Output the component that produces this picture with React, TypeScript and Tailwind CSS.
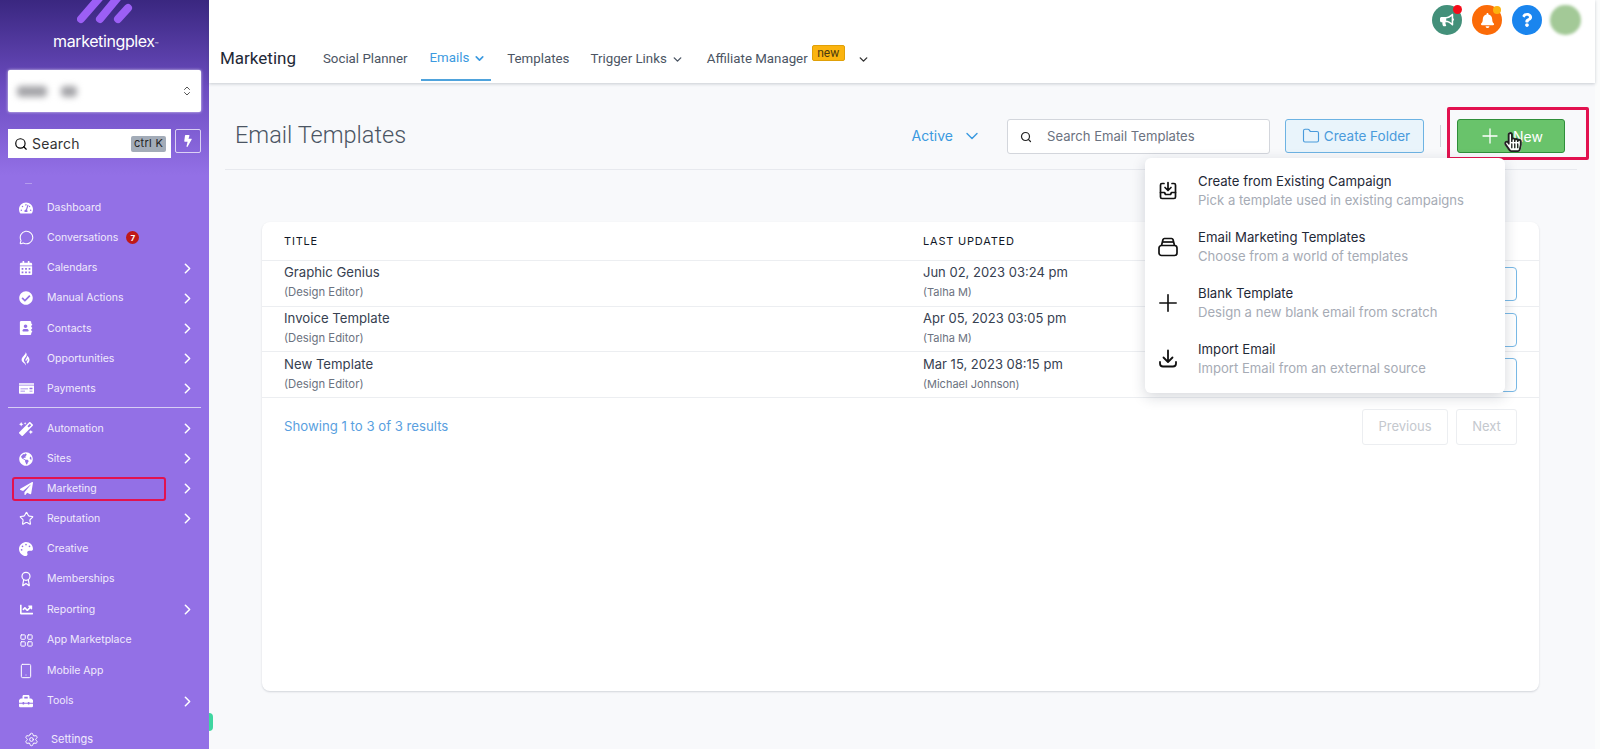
import React from "react";
import { ChevronRight, ChevronDown, ChevronsUpDown, MessageCircle, Star, Award, LayoutGrid, Smartphone, Settings, Search, Folder, Plus } from "lucide-react";
import { FaTachometerAlt, FaCalendarAlt, FaCheckCircle, FaAddressBook, FaGripfire, FaMoneyCheck, FaMagic, FaGlobeAmericas, FaPaperPlane, FaPalette, FaChartLine, FaToolbox, FaBullhorn, FaBell, FaQuestion, FaBolt, FaHandPointer, FaRegHandPointer } from "react-icons/fa";

const G1: [string, React.ReactNode, boolean, string?][] = [
  ["Dashboard", <FaTachometerAlt size={14} />, false],
  ["Conversations", <MessageCircle size={15} strokeWidth={1.7} />, false, "7"],
  ["Calendars", <FaCalendarAlt size={14} />, true],
  ["Manual Actions", <FaCheckCircle size={14} />, true],
  ["Contacts", <FaAddressBook size={14} />, true],
  ["Opportunities", <FaGripfire size={14} />, true],
  ["Payments", <FaMoneyCheck size={15} />, true],
];
const G2: [string, React.ReactNode, boolean][] = [
  ["Automation", <FaMagic size={14} />, true],
  ["Sites", <FaGlobeAmericas size={14} />, true],
  ["Marketing", <FaPaperPlane size={13} />, true],
  ["Reputation", <Star size={15} strokeWidth={1.8} />, true],
  ["Creative", <FaPalette size={14} />, false],
  ["Memberships", <Award size={16} strokeWidth={1.8} />, false],
  ["Reporting", <FaChartLine size={13} />, true],
  ["App Marketplace", <LayoutGrid size={15} strokeWidth={1.6} />, false],
  ["Mobile App", <Smartphone size={16} strokeWidth={1.5} />, false],
  ["Tools", <FaToolbox size={14} />, true],
];

function NavRow({ label, icon, arrow, badge, h }: { label: string; icon: React.ReactNode; arrow: boolean; badge?: string; h: string }) {
  return (
    <div className={`relative flex ${h} items-center pl-[18px] text-[10.5px] text-[#f0eafc]`}>
      <span className="flex w-[16px] justify-center text-white">{icon}</span>
      <span className="ml-[13px]">{label}</span>
      {badge && (
        <span className="ml-[8px] flex h-[13px] w-[13px] items-center justify-center rounded-full bg-[#c01818] text-[8px] font-bold text-white">{badge}</span>
      )}
      {arrow && <ChevronRight size={17} strokeWidth={2.2} className="absolute left-[179px] text-white" />}
      {label === "Marketing" && <span className="absolute left-[12px] top-[3px] h-[24px] w-[154px] rounded-[3px] border-2 border-[#e2124f]" />}
    </div>
  );
}

function Sidebar() {
  return (
    <aside className="relative flex h-full w-[209px] shrink-0 flex-col bg-[#9370e6] font-['Inter',sans-serif]">
      <div className="flex h-[175px] flex-col bg-gradient-to-b from-[#3a2780] via-[#6c4cc0] to-[#9370e6] px-[8px]">
        <div className="flex h-[25px] justify-center">
          <svg width="56" height="25" viewBox="0 0 56 25">
            <g stroke="#9c5ff5" strokeWidth="8" strokeLinecap="round">
              <path d="M4 19 L24 -4" />
              <path d="M23 19 L42 -4" />
              <path d="M41 19 L51 8" />
            </g>
          </svg>
        </div>
        <div className="mt-[5px] pl-[2px] text-center text-[16px] leading-[22px] tracking-[-0.4px] text-white">marketingplex<span className="text-[6px]">™</span></div>
        <div className="mt-[14px] flex h-[42px] items-center justify-between rounded-[2px] bg-white pl-[9px] pr-[8px] shadow-[0_0_3px_rgba(255,255,255,0.8)]">
          <div className="flex gap-[14px]">
            <div className="h-[11px] w-[30px] rounded bg-[#a4a4a8] blur-[3px]" />
            <div className="h-[11px] w-[16px] rounded bg-[#a4a4a8] blur-[3px]" />
          </div>
          <ChevronsUpDown size={12} className="text-[#555]" />
        </div>
        <div className="mt-[17px] flex gap-[4px]">
          <div className="flex h-[29px] w-[163px] items-center bg-white pl-[6px] pr-[5px] text-black">
            <Search size={14} strokeWidth={2} />
            <span className="ml-[4px] text-[14px] tracking-[0.2px] text-[#333]">Search</span>
            <span className="ml-auto flex h-[16px] w-[35px] items-center justify-center rounded-[2px] bg-[#a3acb8] text-[11px] tracking-[0.3px] text-[#222]">ctrl K</span>
          </div>
          <div className="flex h-[24px] w-[26px] items-center justify-center rounded-[2px] border border-white/70 text-white">
            <FaBolt size={12} />
          </div>
        </div>
      </div>
      <div className="ml-[25px] mt-[8px] h-px w-[7px] bg-white/30" />
      <div className="mt-[8.6px]">
        {G1.map(([l, i, a, b]) => <NavRow key={l} label={l} icon={i} arrow={a} badge={b} h="h-[30.2px]" />)}
      </div>
      <div className="mx-[8px] mt-[3px] h-[1px] bg-[#d8cef5]" />
      <div className="mt-[6px]">
        {G2.map(([l, i, a], n) => <NavRow key={l} label={l} icon={i} arrow={a} h={n > 4 ? "h-[30.5px]" : "h-[30px]"} />)}
      </div>
      <div className="mt-[15px] flex items-center pl-[24px] text-[11px] text-[#f0eafc]">
        <Settings size={15} strokeWidth={1.6} className="text-white" />
        <span className="ml-[12px]">Settings</span>
      </div>
      <span className="absolute left-[209px] top-[713px] z-10 h-[18px] w-[4px] rounded-r-full bg-[#3fd6a0]" />
    </aside>
  );
}

function Header() {
  const circle = "relative flex h-[30px] w-[30px] items-center justify-center rounded-full text-white";
  return (
    <header className="h-[83px] bg-white font-['Roboto',sans-serif] shadow-[0_1px_3px_rgba(60,70,90,0.25)]">
      <div className="flex justify-end gap-[10px] pr-[14px] pt-[5px]">
        <div className={`${circle} bg-[#43907a]`}><FaBullhorn size={14} /><span className="absolute right-[0px] top-[0px] h-[9px] w-[9px] rounded-full bg-[#f50d1a]" /></div>
        <div className={`${circle} bg-[#fb6b08]`}><FaBell size={15} /><span className="absolute right-[1px] top-[1px] h-[8px] w-[8px] rounded-full bg-[#fcb20f]" /></div>
        <div className={`${circle} bg-[#1a85ee]`}><FaQuestion size={14} /></div>
        <div className="-ml-[2px] h-[30px] w-[31px] rounded-full bg-[#a3c997] blur-[1.5px]" />
      </div>
      <nav className="flex h-[46px] items-center pl-[11px] pt-[2px] text-[13.3px] text-[#4b5563]">
        <span className="mr-[27px] text-[17px] text-[#1f2937]">Marketing</span>
        <span className="mr-[13px]">Social Planner</span>
        <span className="mr-[16px] flex h-full items-center border-b-2 border-[#4fa3dc] pl-[9px] pr-[5px] text-[#3b9ae0]">
          Emails<ChevronDown size={13} strokeWidth={3} className="ml-[4px]" />
        </span>
        <span className="mr-[21px]">Templates</span>
        <span className="mr-[23px] flex items-center">Trigger Links<ChevronDown size={13} strokeWidth={2.6} className="ml-[4px]" /></span>
        <span>Affiliate Manager</span>
        <span className="mb-[13px] ml-[4px] flex h-[16px] w-[33px] items-center justify-center rounded-[2px] border border-[#e0a008] bg-[#fbb40f] text-[12px] leading-none text-[#4a3a10]">new</span>
        <ChevronDown size={13} strokeWidth={2.6} className="ml-[12px] text-[#333]" />
      </nav>
    </header>
  );
}

function Toolbar() {
  return (
    <div className="ml-[16px] mr-[18px] mt-[36px] flex h-[51px] items-start border-b border-[#e7e9ee] pl-[10px] pr-[12px] font-['Inter',sans-serif]">
      <h1 className="font-['Roboto',sans-serif] text-[23.5px] font-light leading-[32px] text-[#4b5563]">Email Templates</h1>
      <div className="ml-auto flex h-[34px] items-center text-[14px] text-[#3b9ae0]">
        <span className="mb-[2px]">Active</span>
        <ChevronDown size={20} strokeWidth={1.7} className="ml-[9px] mr-[25px]" />
        <div className="mr-[15px] mt-[1px] flex h-[35px] w-[263px] items-center rounded-[3px] border border-[#d3d6dc] bg-white pl-[12px] text-[#6b7280]">
          <Search size={12} strokeWidth={2.4} className="text-[#222]" />
          <span className="ml-[15px] text-[13.1px]">Search Email Templates</span>
        </div>
        <div className="mr-[16px] flex h-[34px] w-[139px] items-center justify-center rounded-[3px] border border-[#6db3e3] bg-[#e9f4fb] pl-[3px] text-[13.5px] text-[#4a9bdc]">
          <Folder size={18} strokeWidth={1.5} className="mr-[4px]" />Create Folder
        </div>
        <div className="mr-[16px] h-[22px] w-px bg-[#d1d5db]" />
        <div className="relative flex h-[34px] w-[108px] items-center rounded-[3px] border border-[#2f8f3a] bg-[#69c36b] pl-[20px] text-[14px] text-white">
          <Plus size={24} strokeWidth={1.3} />
          <span className="ml-[11px]">New</span>
          <span className="absolute left-[-11px] top-[-13px] h-[53px] w-[142px] rounded-[2px] border-[3px] border-[#e2124f]" />
          <span className="absolute left-[45px] top-[12px]">
            <FaHandPointer size={20} className="absolute text-white" />
            <FaRegHandPointer size={20} className="absolute text-[#222]" />
          </span>
        </div>
      </div>
    </div>
  );
}

const ROWS = [
  ["Graphic Genius", "Jun 02, 2023 03:24 pm", "(Talha M)"],
  ["Invoice Template", "Apr 05, 2023 03:05 pm", "(Talha M)"],
  ["New Template", "Mar 15, 2023 08:15 pm", "(Michael Johnson)"],
];

function Table() {
  return (
    <section className="ml-[53px] mt-[52px] h-[469px] w-[1277px] rounded-[8px] bg-white font-['Inter',sans-serif] shadow-[0_1px_2px_rgba(60,70,90,0.2)]">
      <div className="flex h-[39px] items-center border-b border-[#eceef1] pl-[22px] text-[11px] tracking-[0.8px] text-[#111827]">
        <span className="w-[639px]">TITLE</span>
        <span>LAST UPDATED</span>
      </div>
      {ROWS.map(([t, d, u]) => (
        <div key={t} className="flex h-[45.7px] border-b border-[#eceef1] pl-[22px]">
          <div className="w-[639px] pt-[1.4px]">
            <div className="text-[13.2px] leading-[20px] text-[#374151]">{t}</div>
            <div className="mt-[1px] text-[11.3px] leading-[18px] text-[#6b7280]">(Design Editor)</div>
          </div>
          <div className="w-[540px] pt-[1.4px]">
            <div className="text-[13px] leading-[20px] text-[#374151]">{d}</div>
            <div className="mt-[1px] text-[11px] leading-[18px] text-[#6b7280]">{u}</div>
          </div>
          <div className="mt-[6px] flex h-[34px] w-[54px] items-center justify-end rounded-[4px] border border-[#79b9e6] pr-[9px] text-[#3b9ae0]">
            <ChevronDown size={11} strokeWidth={3} />
          </div>
        </div>
      ))}
      <div className="flex items-start pl-[22px] pr-[22px] pt-[11px]">
        <span className="mt-[7px] text-[13.2px] leading-[20px] text-[#5a9fe0]">Showing 1 to 3 of 3 results</span>
        <div className="ml-auto flex gap-[8px] text-[13px] text-[#c4c8ce]">
          <span className="flex h-[36px] w-[86px] items-center justify-center rounded-[3px] border border-[#eceef1]">Previous</span>
          <span className="flex h-[36px] w-[61px] items-center justify-center rounded-[3px] border border-[#eceef1]">Next</span>
        </div>
      </div>
    </section>
  );
}

const MENU: [React.ReactNode, string, string][] = [
  [
    <svg width="20" height="20" viewBox="0 0 20 20" fill="none" stroke="#111" strokeWidth="1.7" strokeLinecap="round" strokeLinejoin="round">
      <path d="M6 2.5H4a1.5 1.5 0 0 0-1.5 1.5v12A1.5 1.5 0 0 0 4 17.5h12a1.5 1.5 0 0 0 1.5-1.5V4A1.5 1.5 0 0 0 16 2.5h-2" />
      <path d="M2.5 11.5H6.5l1 2h5l1-2h4" />
      <path d="M10 1.5v7.5M7 6.5l3 3 3-3" />
    </svg>,
    "Create from Existing Campaign",
    "Pick a template used in existing campaigns",
  ],
  [
    <svg width="20" height="20" viewBox="0 0 20 20" fill="none" stroke="#111" strokeWidth="1.7" strokeLinejoin="round">
      <rect x="1" y="8.5" width="18" height="10" rx="2.5" />
      <path d="M3.5 8.5 L5 2.5 a1.5 1.5 0 0 1 1.4-1h7.2a1.5 1.5 0 0 1 1.4 1L16.5 8.5" />
      <path d="M4.5 5h11" />
    </svg>,
    "Email Marketing Templates",
    "Choose from a world of templates",
  ],
  [<Plus size={28} strokeWidth={1.4} className="-mx-[4px] -my-[4px] text-[#111]" />, "Blank Template", "Design a new blank email from scratch"],
  [
    <svg width="20" height="20" viewBox="0 0 20 20" fill="none" stroke="#111" strokeWidth="1.8" strokeLinecap="round" strokeLinejoin="round">
      <path d="M10 1.5V12.5M5.5 8.5l4.5 4.5 4.5-4.5" />
      <path d="M2 13v1.5A3 3 0 0 0 5 17.5h10a3 3 0 0 0 3-3V13" />
    </svg>,
    "Import Email",
    "Import Email from an external source",
  ],
];

function Menu() {
  return (
    <div className="absolute left-[936px] top-[158px] flex h-[235px] w-[360px] flex-col rounded-[6px] bg-white pt-[5px] font-['Inter',sans-serif] shadow-[0_4px_14px_rgba(30,40,60,0.18)]">
      {MENU.map(([i, t, s]) => (
        <div key={t} className="flex h-[56px] items-center">
          <span className="flex w-[46px] justify-start pl-[13px]">{i}</span>
          <div className="ml-[7px]">
            <div className="text-[13.2px] leading-[19px] text-[#1f2937]">{t}</div>
            <div className="text-[13.1px] leading-[19px] text-[#a6abb5]">{s}</div>
          </div>
        </div>
      ))}
    </div>
  );
}

export default function App() {
  return (
    <div className="flex h-[749px] w-[1600px] overflow-hidden bg-[#fbfcfc]">
      <Sidebar />
      <main className="relative h-full w-[1386px] bg-[#f8f9fb]">
        <Header />
        <Toolbar />
        <Table />
        <Menu />
      </main>
    </div>
  );
}
